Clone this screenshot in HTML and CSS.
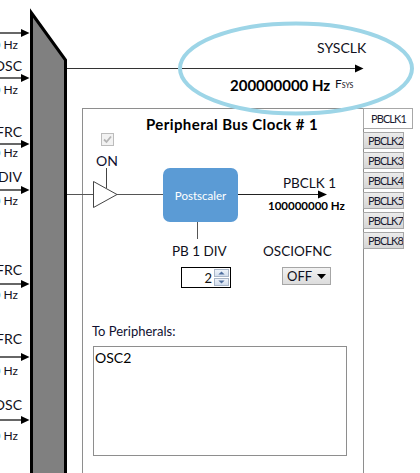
FILE: index.html
```html
<!DOCTYPE html>
<html>
<head>
<meta charset="utf-8">
<link rel="stylesheet" href="styles.css">
</head>
<body>
<div class="canvas">
  <div class="panel"></div>

  <svg class="wires" width="420" height="473" viewBox="0 0 420 473">
    <!-- mux -->
    <polygon points="31.5,13 65.5,60 65.5,480 31.5,480" fill="#808080" stroke="#000" stroke-width="3"/>
    <!-- input arrows -->
    <g stroke="#000" stroke-width="1.2">
      <line x1="0" y1="33" x2="23" y2="33"/>
      <line x1="0" y1="78" x2="23" y2="78"/>
      <line x1="0" y1="144" x2="23" y2="144"/>
      <line x1="0" y1="190" x2="23" y2="190"/>
      <line x1="0" y1="284" x2="23" y2="284"/>
      <line x1="0" y1="357" x2="23" y2="357"/>
      <line x1="0" y1="420" x2="23" y2="420"/>
    </g>
    <g fill="#000">
      <polygon points="21,29 29.5,33 21,37"/>
      <polygon points="21,74 29.5,78 21,82"/>
      <polygon points="21,140 29.5,144 21,148"/>
      <polygon points="21,186 29.5,190 21,194"/>
      <polygon points="21,280 29.5,284 21,288"/>
      <polygon points="21,353 29.5,357 21,361"/>
      <polygon points="21,416 29.5,420 21,424"/>
    </g>
    <!-- SYSCLK -->
    <line x1="67" y1="68.5" x2="357" y2="68.5" stroke="#333" stroke-width="1"/>
    <polygon points="355,64.5 363.5,68.5 355,72.5" fill="#000"/>
    <!-- mux to buffer -->
    <line x1="67" y1="194.5" x2="93" y2="194.5" stroke="#555" stroke-width="1"/>
    <polygon points="93.5,181.5 93.5,207.5 117,194.5" fill="#fff" stroke="#444" stroke-width="1"/>
    <line x1="106.5" y1="168" x2="106.5" y2="188" stroke="#444" stroke-width="1"/>
    <line x1="117" y1="194.5" x2="163" y2="194.5" stroke="#555" stroke-width="1"/>
    <line x1="238" y1="194.5" x2="320" y2="194.5" stroke="#222" stroke-width="1"/>
    <polygon points="318,190.5 327,194.5 318,198.5" fill="#000"/>
    <line x1="197.5" y1="222" x2="197.5" y2="239" stroke="#555" stroke-width="1"/>
    <!-- highlight ellipse -->
    <ellipse cx="296" cy="68.5" rx="116" ry="45" fill="none" stroke="#9dd5e7" stroke-width="4"/>
  </svg>

  <div class="in-label" style="top:58px">OSC</div>
  <div class="in-label" style="top:124px">FRC</div>
  <div class="in-label" style="top:169px">DIV</div>
  <div class="in-label" style="top:262px">FRC</div>
  <div class="in-label" style="top:331px">FRC</div>
  <div class="in-label" style="top:397px">OSC</div>

  <div class="in-hz" style="top:37px"><span class="cut">0</span> Hz</div>
  <div class="in-hz" style="top:82px"><span class="cut">0</span> Hz</div>
  <div class="in-hz" style="top:145px"><span class="cut">0</span> Hz</div>
  <div class="in-hz" style="top:193px"><span class="cut">0</span> Hz</div>
  <div class="in-hz" style="top:287px"><span class="cut">0</span> Hz</div>
  <div class="in-hz" style="top:363px"><span class="cut">0</span> Hz</div>
  <div class="in-hz" style="top:428px"><span class="cut">0</span> Hz</div>

  <div class="sysclk">SYSCLK</div>
  <div class="sysfreq">200000000 Hz <span class="fsys">F<small>SYS</small></span></div>

  <div class="title">Peripheral Bus Clock # 1</div>

  <div class="checkbox"><svg width="11" height="11" viewBox="0 0 11 11"><path d="M2 5.5 L4.5 8 L9 2.5" fill="none" stroke="#b4b4b4" stroke-width="1.8"/></svg></div>
  <div class="on">ON</div>

  <div class="postscaler">Postscaler</div>
  <div class="pbclk">PBCLK 1</div>
  <div class="pbfreq">100000000 Hz</div>

  <div class="pbdiv">PB 1 DIV</div>
  <div class="spinner">
    <span class="spin-val">2</span>
    <span class="spin-btns">
      <span class="spin-btn"><svg width="9" height="5" viewBox="0 0 9 5"><polygon points="0.5,4.5 4.5,0.5 8.5,4.5" fill="#4f6f9f"/></svg></span>
      <span class="spin-btn"><svg width="9" height="5" viewBox="0 0 9 5"><polygon points="0.5,0.5 4.5,4.5 8.5,0.5" fill="#4f6f9f"/></svg></span>
    </span>
  </div>

  <div class="oscio">OSCIOFNC</div>
  <div class="dropdown"><span>OFF</span><svg width="9" height="5" viewBox="0 0 9 5"><polygon points="0,0 9,0 4.5,5" fill="#000"/></svg></div>

  <div class="to-per">To Peripherals:</div>
  <div class="listbox">OSC2</div>

  <div class="tabs">
    <div class="tab active">PBCLK1</div>
    <div class="tab">PBCLK2</div>
    <div class="tab">PBCLK3</div>
    <div class="tab">PBCLK4</div>
    <div class="tab">PBCLK5</div>
    <div class="tab">PBCLK7</div>
    <div class="tab">PBCLK8</div>
  </div>
</div>
</body>
</html>
```

FILE: styles.css
```css
html, body {
  margin: 0;
  padding: 0;
  background: #fff;
}
body {
  font-family: Lato, "Open Sans", sans-serif;
  color: #111;
}
.canvas {
  position: relative;
  width: 420px;
  height: 473px;
  overflow: hidden;
  background: #fff;
}
.panel {
  position: absolute;
  left: 82px;
  top: 108px;
  width: 280px;
  height: 400px;
  border: 1px solid #8e8e8e;
  background: #fff;
}
.wires {
  position: absolute;
  left: 0;
  top: 0;
}
.in-label, .in-hz {
  position: absolute;
  right: 398px;
  line-height: 16px;
  white-space: nowrap;
  font-size: 14px;
  color: #101020;
}
.in-hz {
  right: 402px;
  font-size: 12px;
}
.cut { color: #3a6ad0; }
.sysclk {
  position: absolute;
  left: 317px;
  top: 40px;
  font-size: 14px;
  line-height: 16px;
  color: #101020;
}
.sysfreq {
  position: absolute;
  left: 230px;
  top: 76px;
  font-size: 15px;
  font-weight: 700;
  line-height: 18px;
  white-space: nowrap;
  color: #000;
}
.fsys {
  font-weight: 400;
  font-size: 12px;
  position: relative;
  top: -3px;
  margin-left: 1px;
  color: #101020;
}
.fsys small { font-size: 7px; }
.title {
  position: absolute;
  left: 146px;
  top: 115px;
  font-size: 15px;
  letter-spacing: 0.4px;
  font-weight: 700;
  line-height: 18px;
  white-space: nowrap;
  color: #000;
}
.checkbox {
  position: absolute;
  left: 101px;
  top: 133px;
  width: 11px;
  height: 11px;
  border: 1px solid #bcbcbc;
  background: #f2f2f2;
  display: flex;
}
.on {
  position: absolute;
  left: 96px;
  top: 153px;
  font-size: 14px;
  line-height: 16px;
  color: #101030;
}
.postscaler {
  position: absolute;
  left: 163px;
  top: 168px;
  width: 75px;
  height: 54px;
  border-radius: 7px;
  background: #5b9bd5;
  color: #fff;
  font-size: 11.5px;
  display: flex;
  align-items: center;
  justify-content: center;
}
.pbclk {
  position: absolute;
  left: 283px;
  top: 175px;
  font-size: 13.5px;
  line-height: 16px;
  white-space: nowrap;
  color: #101020;
}
.pbfreq {
  position: absolute;
  left: 268px;
  top: 199px;
  font-size: 11.5px;
  font-weight: 700;
  line-height: 14px;
  white-space: nowrap;
  color: #000;
}
.pbdiv, .oscio {
  position: absolute;
  top: 243px;
  font-size: 13.5px;
  line-height: 16px;
  white-space: nowrap;
  color: #101020;
}
.pbdiv { left: 172px; }
.oscio { left: 263px; }
.spinner {
  position: absolute;
  left: 181px;
  top: 267px;
  width: 48px;
  height: 19px;
  border: 1px solid #000;
  background: #fff;
  display: flex;
  align-items: center;
  justify-content: flex-end;
}
.spin-val {
  font-size: 13px;
  line-height: 16px;
  margin-right: 2px;
}
.spin-btns {
  display: flex;
  flex-direction: column;
  gap: 1px;
  margin-right: 1px;
}
.spin-btn {
  width: 15px;
  height: 8px;
  border: 1px solid #a9b6c8;
  box-sizing: border-box;
  background: linear-gradient(#eef3fa, #d3deed);
  display: flex;
  align-items: center;
  justify-content: center;
}
.spin-btn svg { width: 7px; height: 4px; }
.dropdown {
  position: absolute;
  left: 282px;
  top: 267px;
  height: 16px;
  border: 1px solid #a6a6a6;
  background: linear-gradient(#f2f2f2, #dcdcdc);
  display: flex;
  align-items: center;
  justify-content: space-between;
  padding: 0 4px 0 4px;
  width: 39px;
  font-size: 13px;
  color: #101020;
}
.to-per {
  position: absolute;
  left: 92px;
  top: 323px;
  font-size: 13px;
  line-height: 16px;
  white-space: nowrap;
  color: #101030;
}
.listbox {
  position: absolute;
  left: 93px;
  top: 346px;
  width: 251px;
  height: 106px;
  border: 1px solid #8e8e8e;
  background: #fff;
  font-size: 14px;
  line-height: 18px;
  padding: 2px 0 0 1px;
  color: #000;
}
.tabs {
  position: absolute;
  left: 363px;
  top: 108px;
  display: flex;
  flex-direction: column;
  align-items: flex-start;
  gap: 3px;
}
.tab {
  box-sizing: border-box;
  width: 41px;
  height: 17px;
  border: 1px solid #a8a8a8;
  background: linear-gradient(#ececec, #d6d6d6);
  font-size: 11px;
  letter-spacing: -0.9px;
  line-height: 15px;
  padding-left: 4px;
  white-space: nowrap;
  overflow: hidden;
  color: #1a1a30;
}
.tab.active {
  width: 50px;
  height: 21px;
  background: #fff;
  line-height: 19px;
  padding-left: 7px;
}
```
